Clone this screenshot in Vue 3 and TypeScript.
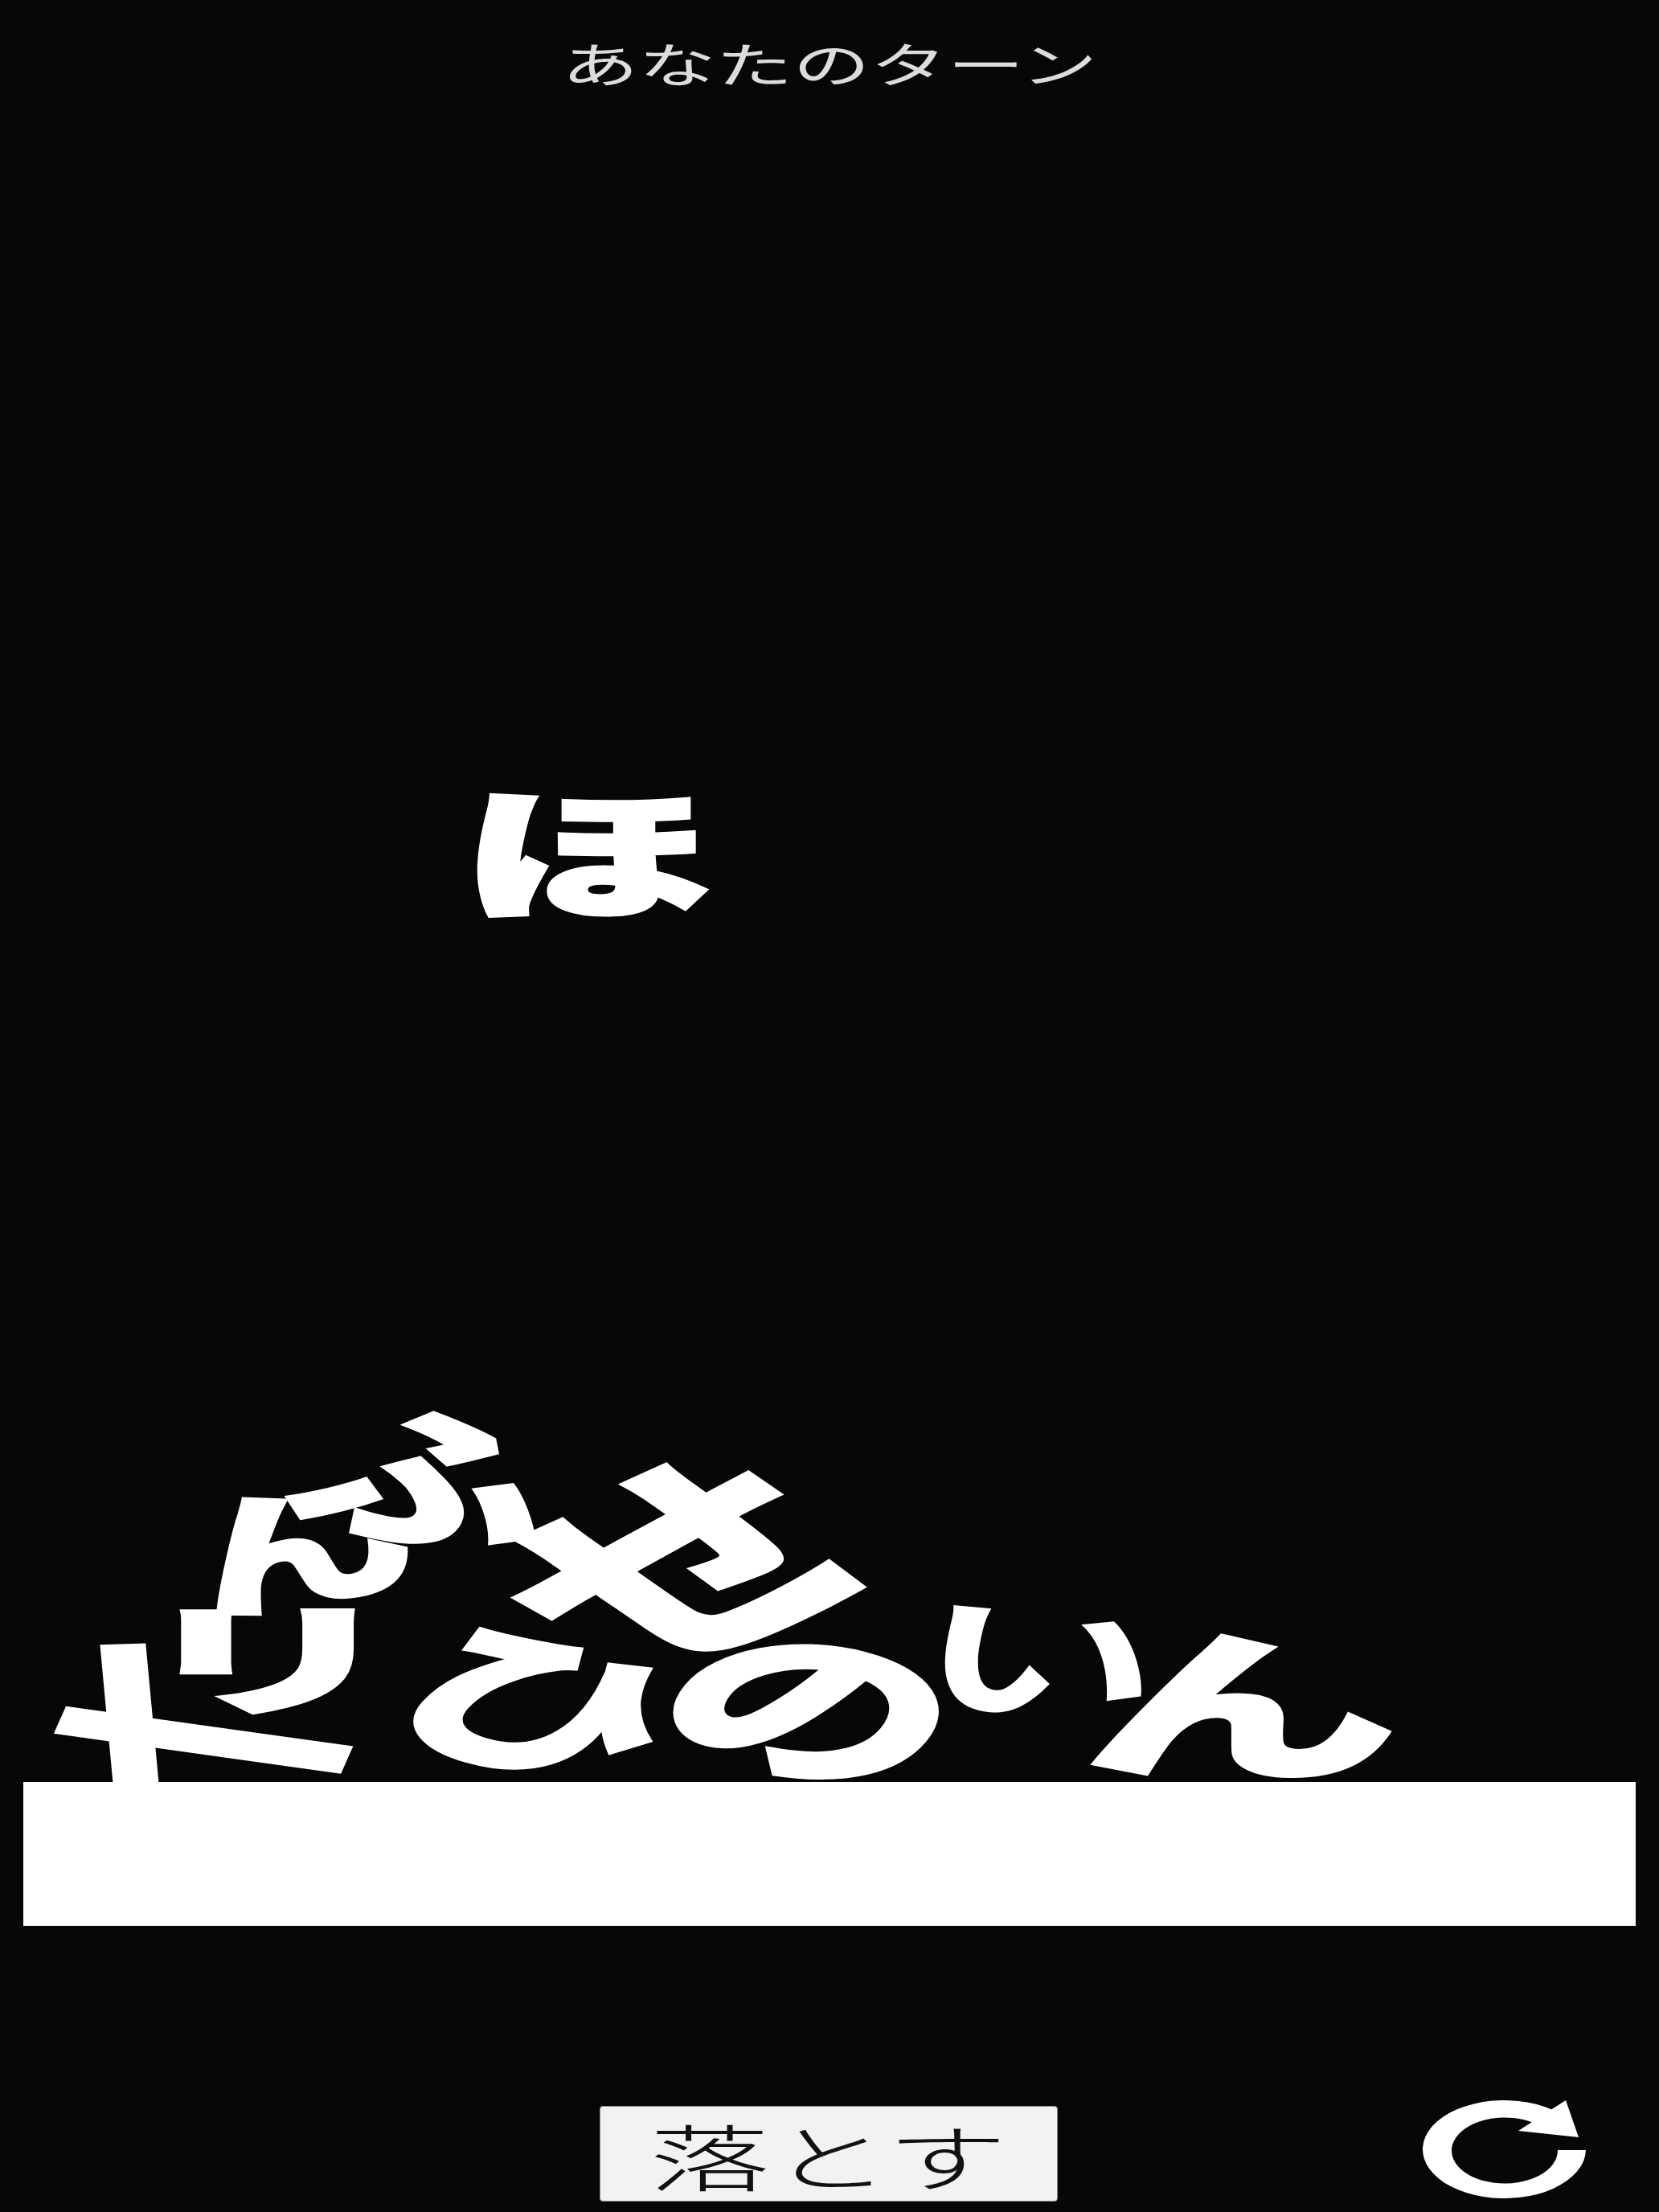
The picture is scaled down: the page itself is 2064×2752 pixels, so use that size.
<script setup lang="ts">
interface Piece { ch: string; x: number; y: number; size: number; rot: number; sx?: number; w?: number; st?: number }
const squash = 0.56
const stageTop = 155
const pieces: Piece[] = [
  { ch: '一', x: 257, y: 2155, size: 395, rot: 14, w: 900 },
  { ch: '丨', x: 160, y: 2122, size: 318, rot: -3, st: 6 },
  { ch: 'リ', x: 333, y: 2056, size: 270, rot: 0, sx: 1.22, st: 6 },
  { ch: 'ん', x: 358, y: 1918, size: 290, rot: -18, st: 4 },
  { ch: 'ふ', x: 538, y: 1829, size: 335, rot: 15, st: 4 },
  { ch: 'せ', x: 832, y: 1935, size: 450, rot: -39, st: 4 },
  { ch: 'ひ', x: 680, y: 2112, size: 340, rot: 27, st: 4 },
  { ch: 'の', x: 1020, y: 2113, size: 362, rot: 25, st: 4 },
  { ch: 'い', x: 1295, y: 2055, size: 310, rot: 8, w: 700 },
  { ch: 'ん', x: 1546, y: 2110, size: 360, rot: 2, st: 4, sx: 1.1 },
  { ch: 'ほ', x: 730, y: 1053, size: 315, rot: 0, st: 8 }
]
function pieceStyle(p: Piece) {
  return {
    left: `${p.x}px`,
    top: `${p.y - stageTop}px`,
    fontSize: `${p.size}px`,
    fontWeight: p.w ?? 900,
    WebkitTextStroke: `${p.st ?? 0}px #fff`,
    transform: `translate(-50%, -50%) scale(1, ${squash}) rotate(${p.rot}deg) scaleX(${p.sx ?? 1})`
  }
}
</script>

<template>
  <div class="page">
    <div class="title"><span>あなたのターン</span></div>
    <div class="stage">
      <span v-for="(p, i) in pieces" :key="i" class="piece" :style="pieceStyle(p)">{{ p.ch }}</span>
      <div class="floor"></div>
    </div>
    <div class="footer">
      <button class="drop"><span>落とす</span></button>
      <svg class="reload" viewBox="0 0 203 124" preserveAspectRatio="none">
        <path d="M203 62 A101.5 61 0 1 1 170 16 L140 29 A66 41 0 1 0 168 62 Z" fill="#fff" />
        <path d="M178 0 L194 46 L119 38 Z" fill="#fff" />
      </svg>
    </div>
  </div>
</template>

<style scoped>
.page {
  width: 2064px;
  height: 2752px;
  background: #070707;
  display: flex;
  flex-direction: column;
  overflow: hidden;
  font-family: "Noto Sans CJK JP", sans-serif;
}
.title {
  height: 155px;
  display: flex;
  justify-content: center;
  align-items: center;
  color: #dcdcdc;
  font-size: 96px;
  font-weight: 400;
  line-height: 1;
}
.title span {
  transform: scale(1, 0.62);
}
.stage {
  position: relative;
  height: 2241px;
  display: flex;
  flex-direction: column;
  justify-content: flex-end;
  padding: 0 29px;
}
.piece {
  position: absolute;
  width: 1em;
  height: 1em;
  line-height: 1;
  text-align: center;
  color: #fff;
  white-space: nowrap;
}
.floor {
  height: 179px;
  background: #fff;
}
.footer {
  flex: 1;
  display: flex;
  align-items: flex-end;
  padding: 0 91px 13px 746px;
  justify-content: space-between;
}
.drop {
  width: 570px;
  height: 119px;
  padding: 0;
  border: 1px solid #888;
  border-radius: 4px;
  background: #f2f2f2;
  color: #111;
  font-family: "Noto Sans CJK JP", sans-serif;
  font-weight: 300;
  font-size: 90px;
  line-height: 1;
  display: flex;
  justify-content: center;
  align-items: center;
}
.drop span {
  transform: scaleX(1.667);
}
.reload {
  width: 203px;
  height: 124px;
  margin-bottom: 2px;
}
</style>
